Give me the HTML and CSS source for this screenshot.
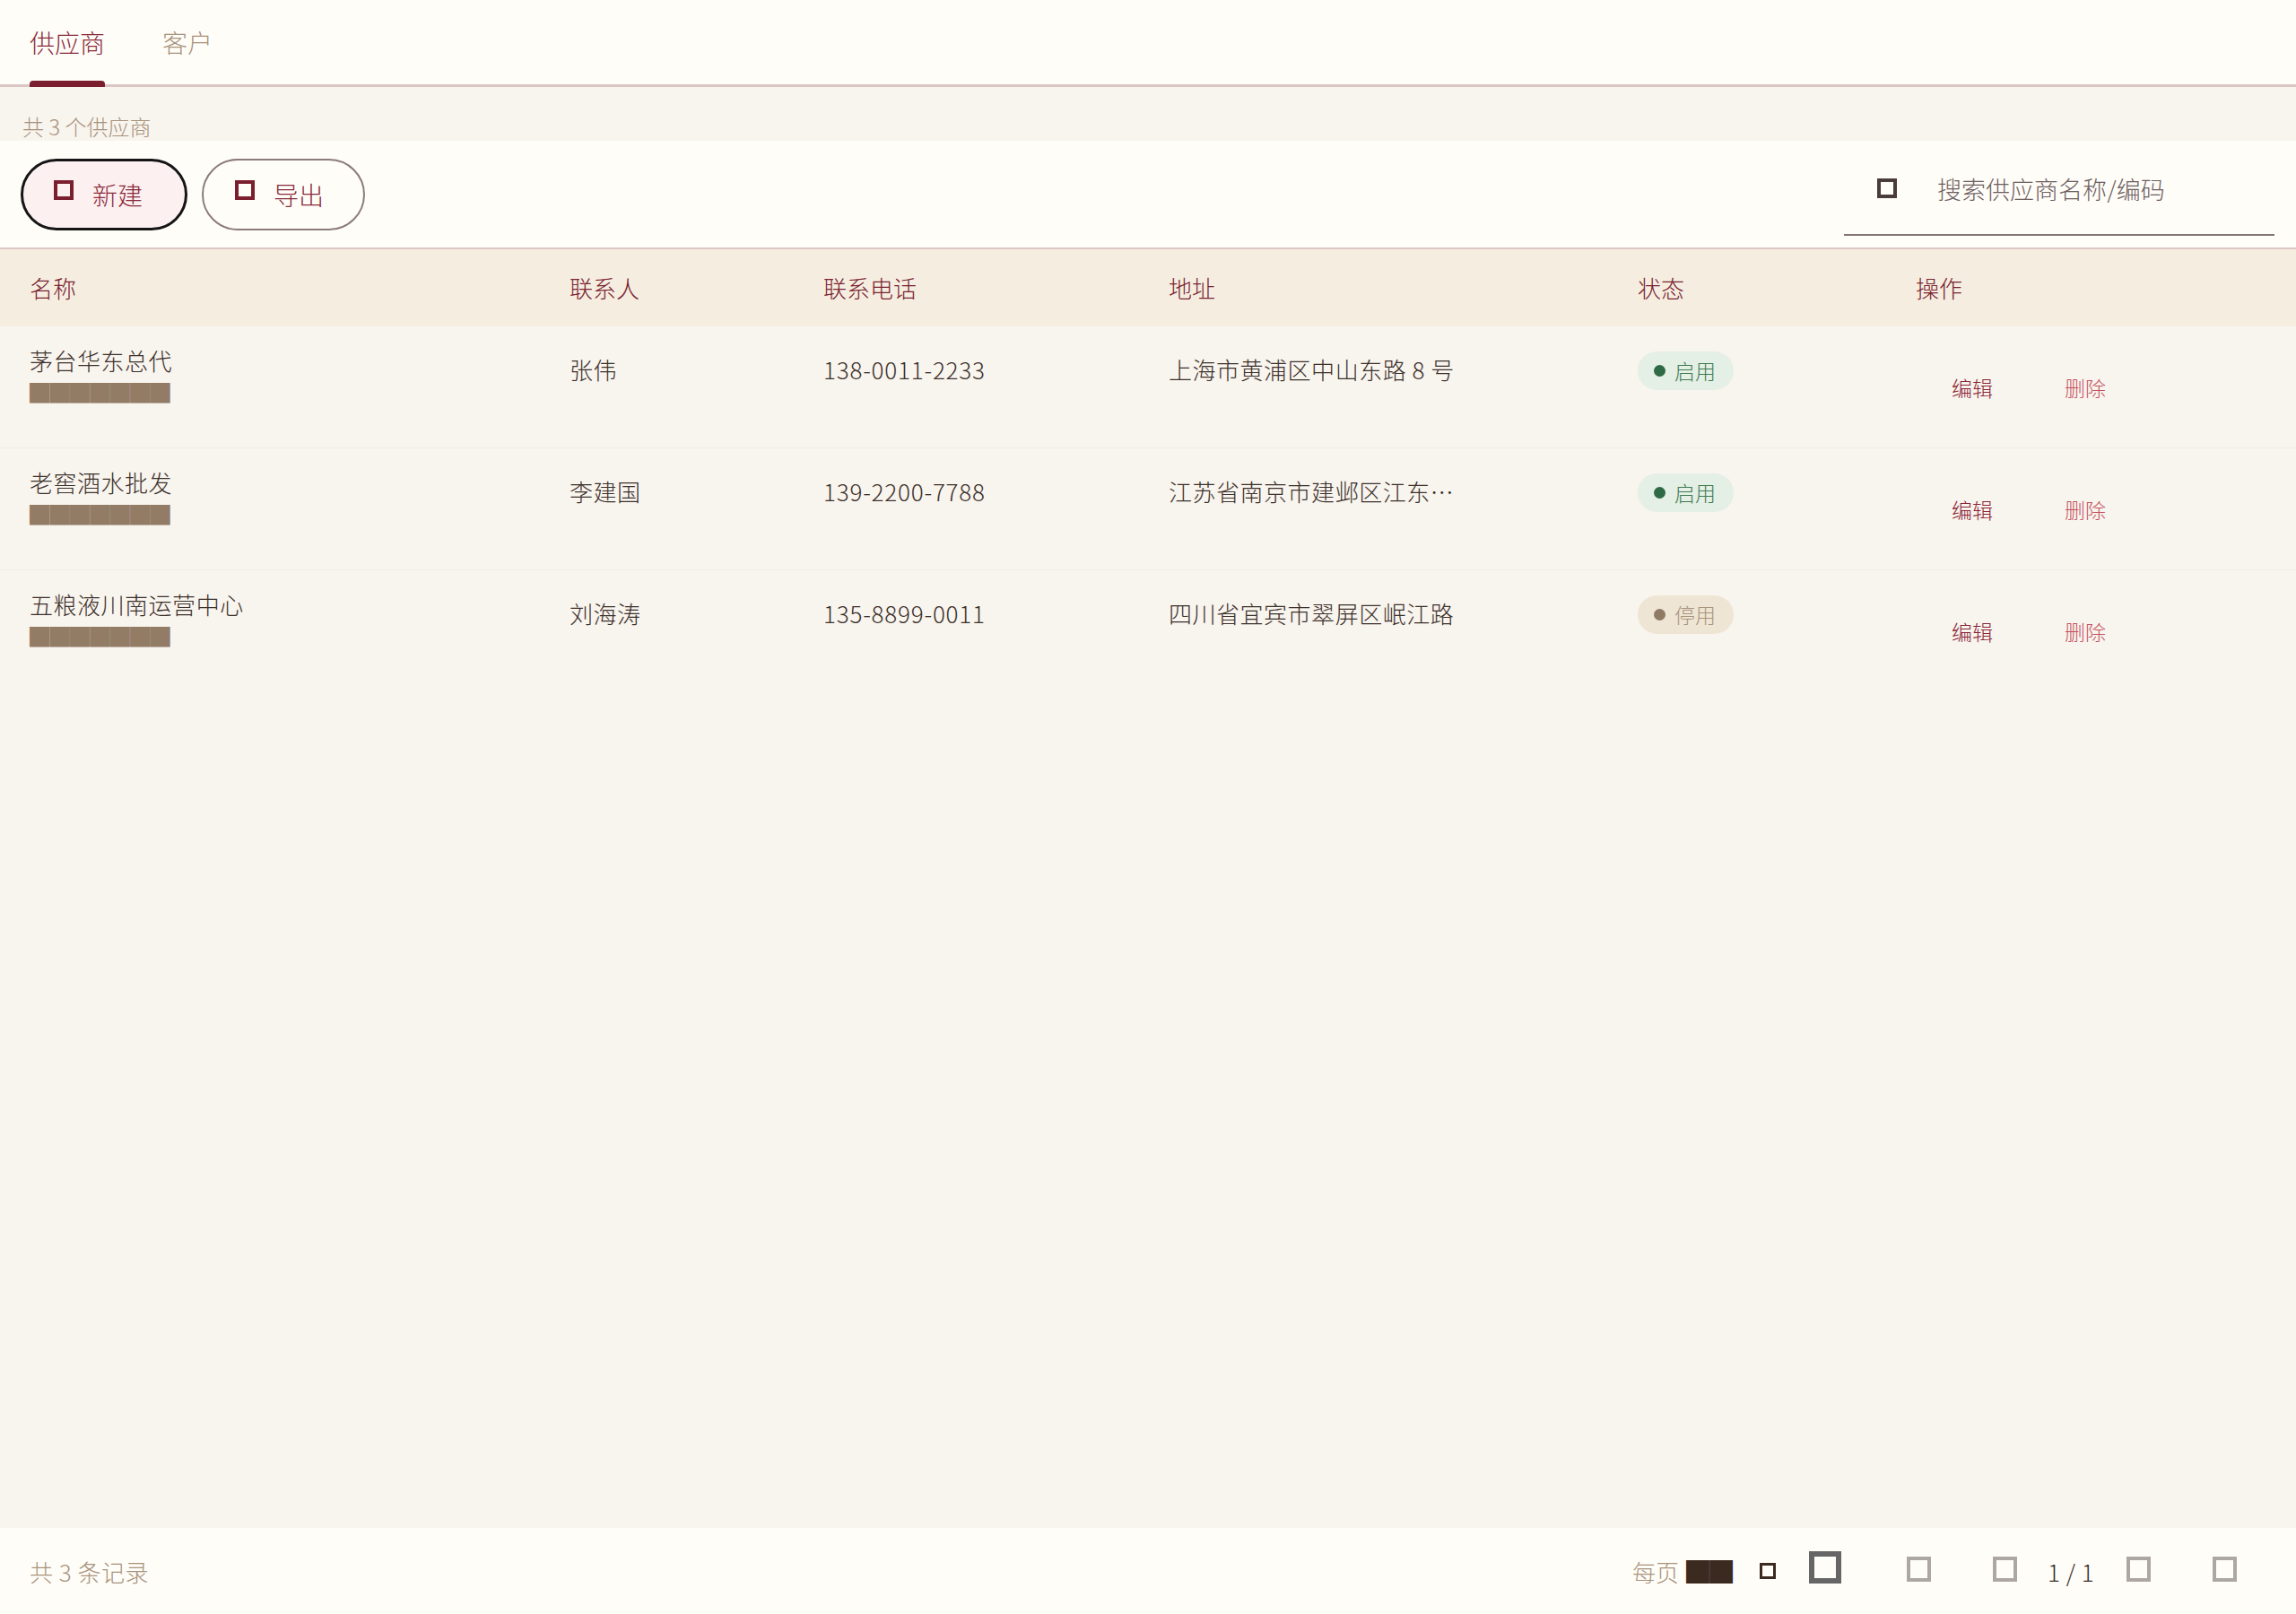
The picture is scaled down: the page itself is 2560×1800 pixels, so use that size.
FILE: index.html
```html
<!DOCTYPE html>
<html lang="zh-CN">
<head>
<meta charset="utf-8">
<title>供应商</title>
<link rel="stylesheet" href="styles.css">
</head>
<body>
<div class="app">
  <nav class="tabs">
    <div class="tab active">供应商</div>
    <div class="tab">客户</div>
  </nav>
  <div class="summary">共 3 个供应商</div>
  <div class="toolbar">
    <div class="actions">
      <button class="btn btn-primary"><span class="ico"></span><span>新建</span></button>
      <button class="btn btn-outline"><span class="ico"></span><span>导出</span></button>
    </div>
    <label class="search"><span class="ico ico-search"></span><input type="text" placeholder="搜索供应商名称/编码"></label>
  </div>
  <div class="table">
    <div class="row head">
      <div class="cell">名称</div>
      <div class="cell">联系人</div>
      <div class="cell">联系电话</div>
      <div class="cell">地址</div>
      <div class="cell">状态</div>
      <div class="cell">操作</div>
    </div>
    <div class="row body-row">
      <div class="cell c-name"><div class="name">茅台华东总代</div><div class="code">███████</div></div>
      <div class="cell c-text">张伟</div>
      <div class="cell c-text phone">138-0011-2233</div>
      <div class="cell c-text"><span class="addr">上海市黄浦区中山东路 8 号</span></div>
      <div class="cell c-status"><span class="pill on"><i class="dot"></i>启用</span></div>
      <div class="cell c-ops"><button class="op edit">编辑</button><button class="op del">删除</button></div>
    </div>
    <div class="row body-row">
      <div class="cell c-name"><div class="name">老窖酒水批发</div><div class="code">███████</div></div>
      <div class="cell c-text">李建国</div>
      <div class="cell c-text phone">139-2200-7788</div>
      <div class="cell c-text"><span class="addr">江苏省南京市建邺区江东中路 369 号</span></div>
      <div class="cell c-status"><span class="pill on"><i class="dot"></i>启用</span></div>
      <div class="cell c-ops"><button class="op edit">编辑</button><button class="op del">删除</button></div>
    </div>
    <div class="row body-row">
      <div class="cell c-name"><div class="name">五粮液川南运营中心</div><div class="code">███████</div></div>
      <div class="cell c-text">刘海涛</div>
      <div class="cell c-text phone">135-8899-0011</div>
      <div class="cell c-text"><span class="addr">四川省宜宾市翠屏区岷江路</span></div>
      <div class="cell c-status"><span class="pill off"><i class="dot"></i>停用</span></div>
      <div class="cell c-ops"><button class="op edit">编辑</button><button class="op del">删除</button></div>
    </div>
  </div>
  <div class="spacer"></div>
  <footer class="pager">
    <div class="total">共 3 条记录</div>
    <div class="pager-right">
      <span class="per">每页</span>
      <span class="size-sel">██</span>
      <span class="chev"></span>
      <span class="bigbox"></span>
      <span class="pbtn"><span class="pbox"></span></span>
      <span class="pbtn"><span class="pbox"></span></span>
      <span class="pageno">1 / 1</span>
      <span class="pbtn"><span class="pbox"></span></span>
      <span class="pbtn"><span class="pbox"></span></span>
    </div>
  </footer>
</div>
</body>
</html>
```
FILE: styles.css
```css
html, body {
  margin: 0;
  padding: 0;
}
body {
  background: #f8f4ee;
  font-family: "Noto Sans CJK SC", "Noto Sans", sans-serif;
  font-weight: 300;
  color: #3d302b;
}
.app {
  min-height: 100vh;
  display: flex;
  flex-direction: column;
}

/* tabs */
.tabs {
  height: 94px;
  background: #fffdf8;
  border-bottom: 3px solid #dbc5c5;
  display: flex;
  align-items: center;
  gap: 64px;
  padding-left: 33px;
}
.tab {
  position: relative;
  font-size: 28px;
  line-height: 94px;
  color: #a8937c;
}
.tab.active {
  color: #8a2a3a;
}
.tab.active::after {
  content: "";
  position: absolute;
  left: 0;
  right: 0;
  bottom: -3px;
  height: 7px;
  background: #7b1e2e;
  border-radius: 4px 4px 0 0;
}

/* summary */
.summary {
  height: 60px;
  box-sizing: border-box;
  padding: 29px 0 0 25px;
  font-size: 24px;
  line-height: 30px;
  color: #a8937c;
}

/* toolbar */
.toolbar {
  height: 119px;
  background: #fffdf8;
  border-bottom: 2px solid #dcc6c6;
  display: flex;
  align-items: center;
  justify-content: space-between;
  padding: 0 24px 0 23px;
}
.actions {
  display: flex;
  gap: 16px;
}
.btn {
  height: 80px;
  box-sizing: border-box;
  display: flex;
  align-items: center;
  gap: 21px;
  padding: 0 0 0 34px;
  border-radius: 40px;
  font-family: inherit;
  font-weight: 300;
  font-size: 28px;
  line-height: 36px;
  color: #8a2a3a;
  background: transparent;
  cursor: pointer;
}
.btn-primary {
  width: 186px;
  border: 3px solid #151515;
  background: #fdf0f1;
}
.btn-outline {
  width: 182px;
  border: 2px solid #8b7b7b;
  padding-left: 35px;
}
.ico {
  display: block;
  width: 22px;
  height: 22px;
  box-sizing: border-box;
  border: 4px solid #7b1e2e;
  margin-top: -9px;
  flex: none;
}
.search {
  align-self: flex-end;
  margin-bottom: 13px;
  width: 480px;
  box-sizing: border-box;
  border-bottom: 2px solid #857676;
  display: flex;
  align-items: center;
  gap: 45px;
  padding: 20px 0 35px 37px;
}
.ico-search {
  border-color: #4a3c3c;
  margin-top: 0;
}
.search input {
  border: none;
  outline: none;
  background: transparent;
  padding: 0;
  height: 32px;
  width: 330px;
  font-family: inherit;
  font-weight: 300;
  font-size: 27px;
  color: #3d302b;
}
.search input::placeholder {
  color: #6e6060;
}

/* table */
.row {
  display: grid;
  grid-template-columns: 602px 283px 385px 523px 310px 1fr;
}
.cell {
  padding-left: 33px;
  min-width: 0;
}
.head {
  height: 86px;
  background: #f5eee0;
  align-items: center;
  font-size: 26px;
  line-height: 36px;
  color: #7a2231;
}
.body-row {
  height: 136px;
  box-sizing: border-box;
  border-bottom: 1px solid #f2ece4;
  align-items: start;
  font-size: 26px;
  line-height: 36px;
  color: #3d302b;
  letter-spacing: 0.02em;
}
.body-row:last-child {
  border-bottom: none;
}
.c-name {
  padding-top: 20px;
}
.name {
  line-height: 36px;
}
.code {
  margin-top: 6px;
  font-size: 22.4px;
  line-height: 22px;
  height: 22px;
  color: #927c66;
  white-space: nowrap;
  letter-spacing: 0;
}
.c-text {
  padding-top: 30px;
}
.phone {
  letter-spacing: 0.8px;
}
.addr {
  display: inline-block;
  max-width: 324px;
  white-space: nowrap;
  overflow: hidden;
  text-overflow: ellipsis;
  vertical-align: top;
}
.c-status {
  padding-top: 27px;
}
.pill {
  display: inline-flex;
  align-items: center;
  gap: 10px;
  height: 43px;
  padding: 0 20px 0 18px;
  border-radius: 22px;
  font-size: 23px;
  line-height: 43px;
  letter-spacing: 0;
}
.dot {
  display: block;
  width: 13px;
  height: 13px;
  border-radius: 50%;
}
.pill.on {
  background: #e4efe5;
  color: #3f7a52;
}
.pill.on .dot {
  background: #2d6a45;
}
.pill.off {
  background: #efe5d4;
  color: #a8937c;
}
.pill.off .dot {
  background: #8f7a64;
}
.c-ops {
  padding-top: 46px;
  display: flex;
  padding-left: 0;
  margin-left: 33px;
}
.op {
  border: none;
  background: transparent;
  padding: 4px 40px;
  font-family: inherit;
  font-weight: 300;
  font-size: 23px;
  line-height: 36px;
  cursor: pointer;
}
.op.edit {
  color: #8a2436;
}
.op.del {
  color: #c4525e;
}

.spacer {
  flex: 1;
}

/* pager */
.pager {
  height: 96px;
  background: #fffdf8;
  display: flex;
  align-items: center;
  padding: 0 32px 0 33px;
  font-size: 26px;
}
.total {
  color: #a8937c;
  letter-spacing: 0.02em;
}
.pager-right {
  margin-left: auto;
  display: flex;
  align-items: center;
}
.per {
  color: #a8937c;
  margin-right: 8px;
}
.size-sel {
  font-size: 26px;
  line-height: 26px;
  color: #3a2a1f;
  margin-right: 30px;
}
.chev {
  width: 18px;
  height: 18px;
  box-sizing: border-box;
  border: 3px solid #3a2a1f;
  margin-right: 37px;
}
.bigbox {
  width: 36px;
  height: 36px;
  box-sizing: border-box;
  border: 6px solid #666666;
  margin-right: 38px;
  margin-top: -8px;
}
.pbtn {
  width: 96px;
  display: flex;
  justify-content: center;
}
.pbox {
  width: 27px;
  height: 28px;
  box-sizing: border-box;
  border: 4px solid #aca7a2;
  margin-top: -4px;
}
.pageno {
  color: #3a2e2a;
  width: 53px;
  white-space: nowrap;
  letter-spacing: 0.5px;
}
```
